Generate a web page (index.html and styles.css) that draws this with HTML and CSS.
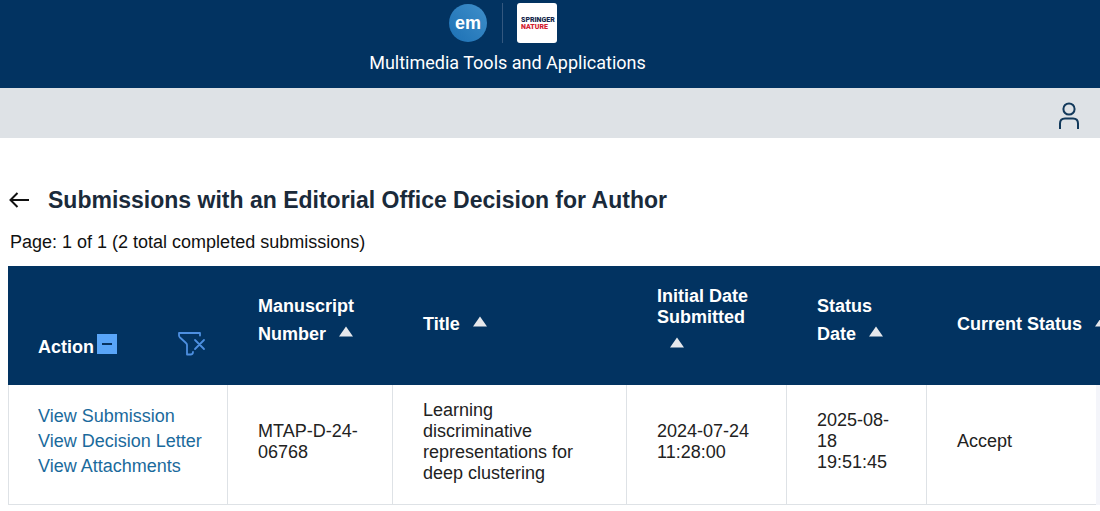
FILE: index.html
```html
<!DOCTYPE html>
<html lang="en">
<head>
<meta charset="utf-8">
<title>Multimedia Tools and Applications</title>
<link rel="stylesheet" href="styles.css">
</head>
<body>
<svg class="defs" aria-hidden="true">
  <symbol id="sort" viewBox="0 0 28 36"><path d="M20 9.500 27 19.500H13z" fill="#e6e8ec"/></symbol>
</svg>
<header class="masthead">
  <div class="logos">
    <svg class="em-logo" viewBox="0 0 38 38" role="img" aria-label="em">
      <defs><linearGradient id="disc" x1="0" y1="1" x2="1" y2="0"><stop offset="0" stop-color="#1c70b4"/><stop offset="1" stop-color="#3f8fca"/></linearGradient></defs>
      <circle cx="19" cy="19" r="19" fill="url(#disc)"/>
      <text x="19" y="25" class="em-text">em</text>
    </svg>
    <span class="divider"></span>
    <svg class="springer-logo" viewBox="0 0 40 40" role="img" aria-label="Springer Nature">
      <rect width="40" height="40" rx="3" fill="#fff"/>
      <text x="4" y="19" class="springer-text">SPRINGER</text>
      <text x="4" y="26" class="springer-text nature-text">NATURE</text>
    </svg>
  </div>
  <div class="journal">Multimedia Tools and Applications</div>
</header>
<nav class="toolbar">
  <button class="icon-button" type="button" aria-label="Account">
    <svg width="20" height="28" viewBox="0 0 20 28" fill="none" stroke="#12395b" stroke-width="2"><circle cx="10" cy="7" r="5.600"/><path d="M1 27v-5.500c0-3 2-5 5-5h8c3 0 5 2 5 5V27"/></svg>
  </button>
</nav>
<main class="content">
  <div class="heading">
    <a class="back" href="#" aria-label="Back">
      <svg width="20" height="16" viewBox="0 0 20 16" fill="none" stroke="#111" stroke-width="2"><path d="M20 8H2M8.500 1 1.500 8l7 7"/></svg>
    </a>
    <h1>Submissions with an Editorial Office Decision for Author</h1>
  </div>
  <p class="page-info">Page: 1 of 1 (2 total completed submissions)</p>
  <table class="submissions">
    <colgroup><col class="c-action"><col class="c-number"><col class="c-title"><col class="c-initial"><col class="c-date"><col><col class="c-edge"></colgroup>
    <thead>
      <tr>
        <th class="action-head">
          <div class="action-bar">
            <span>Action</span>
            <button class="collapse" type="button" aria-label="Collapse"><svg width="20" height="20" viewBox="0 0 20 20"><path d="M5 10h10" stroke="#063260" stroke-width="2"/></svg></button>
            <button class="filter" type="button" aria-label="Clear filter"><svg width="28" height="24" viewBox="0 0 28 24" fill="none" stroke="#4d8fe0" stroke-width="1.800" stroke-linecap="round" stroke-linejoin="round"><path d="M22 3.500V1H1v2.500c0 1 .5 1.500 1 2l6 5.500c.7.600 1 1 1 2V22.500h3.500c1.500 0 2.500-1 2.500-2.500M17 8l9 9M26 8l-9 9"/></svg></button>
          </div>
        </th>
        <th>Manuscript Number<svg class="sort"><use href="#sort"/></svg></th>
        <th>Title<svg class="sort"><use href="#sort"/></svg></th>
        <th>Initial Date Submitted<svg class="sort"><use href="#sort"/></svg></th>
        <th>Status Date<svg class="sort"><use href="#sort"/></svg></th>
        <th class="nowrap">Current Status<svg class="sort"><use href="#sort"/></svg></th>
        <th class="edge"></th>
      </tr>
    </thead>
    <tbody>
      <tr>
        <td class="actions"><a href="#">View Submission</a><a href="#">View Decision Letter</a><a href="#">View Attachments</a></td>
        <td>MTAP-D-24-06768</td>
        <td>Learning discriminative representations for deep clustering</td>
        <td>2024-07-24 11:28:00</td>
        <td>2025-08-18 19:51:45</td>
        <td>Accept</td>
        <td class="edge"></td>
      </tr>
    </tbody>
  </table>
</main>
</body>
</html>
```
FILE: styles.css
```css
* { box-sizing: border-box; }
body {
  margin: 0;
  background: #fff;
  color: #222;
  font: 18px/21px "Liberation Sans", Arial, sans-serif;
  overflow-x: hidden;
}
button { border: 0; padding: 0; background: none; cursor: pointer; }
svg { display: block; }
.defs { display: none; }
.masthead {
  display: flex;
  flex-direction: column;
  align-items: center;
  gap: 8px;
  padding: 3px 85px 14px 0;
  background: #023361;
}
.logos { display: flex; align-items: center; padding-right: 9px; }
.em-logo { width: 38px; height: 38px; }
.em-text { font: bold 18px "Liberation Sans", Arial, sans-serif; fill: #fff; text-anchor: middle; }
.divider { width: 1px; height: 40px; margin: 0 14px 0 15px; background: #34587f; }
.springer-logo { width: 40px; height: 40px; }
.springer-text { font: 900 7px Roboto, sans-serif; fill: #16284c; }
.nature-text { fill: #d3202f; }
.journal { font: 18px/23px Roboto, sans-serif; color: #fff; }
.toolbar {
  display: flex;
  justify-content: flex-end;
  align-items: center;
  height: 50px;
  padding: 6px 21px 0 0;
  background: #dee2e6;
}
.content { padding: 48px 0 0 8px; }
.heading { display: flex; align-items: center; gap: 19px; padding-left: 1px; }
h1 { margin: 0; font-size: 23px; line-height: 28px; color: #1a2a3a; white-space: nowrap; }
.page-info { margin: 18px 0 13px 2px; color: #111; }
.submissions { width: 100%; table-layout: fixed; border-collapse: separate; border-spacing: 0; }
.c-action { width: 220px; }
.c-number { width: 165px; }
.c-title { width: 234px; }
.c-initial { width: 160px; }
.c-date { width: 140px; }
.c-edge { width: 4px; }
th, td { text-align: left; vertical-align: middle; padding: 0 30px; }
th { height: 119px; padding-bottom: 2px; background: #023361; color: #fff; }
td { height: 120px; padding-bottom: 6px; border-right: 1px solid #dee2e6; border-bottom: 1px solid #dee2e6; }
td:first-child { border-left: 1px solid #dee2e6; padding-left: 29px; }
.sort { display: inline-block; width: 28px; height: 36px; vertical-align: middle; }
.nowrap { white-space: nowrap; padding-right: 0; }
.action-head { padding: 42px 22px 0 30px; }
.action-bar { display: flex; align-items: center; gap: 3px; }
.action-bar span { padding-top: 2px; }
.collapse { background: #59a5f8; margin-bottom: 6px; }
.filter { margin: 0 0 6px auto; }
.actions { padding-right: 20px; }
.actions a { display: block; line-height: 25px; color: #1a6a9c; text-decoration: none; }
th.edge, td.edge { padding: 0; }
td.edge { background: #f4f5fa; border: 0; }
td:nth-last-child(2) { border-right: 0; }
```
